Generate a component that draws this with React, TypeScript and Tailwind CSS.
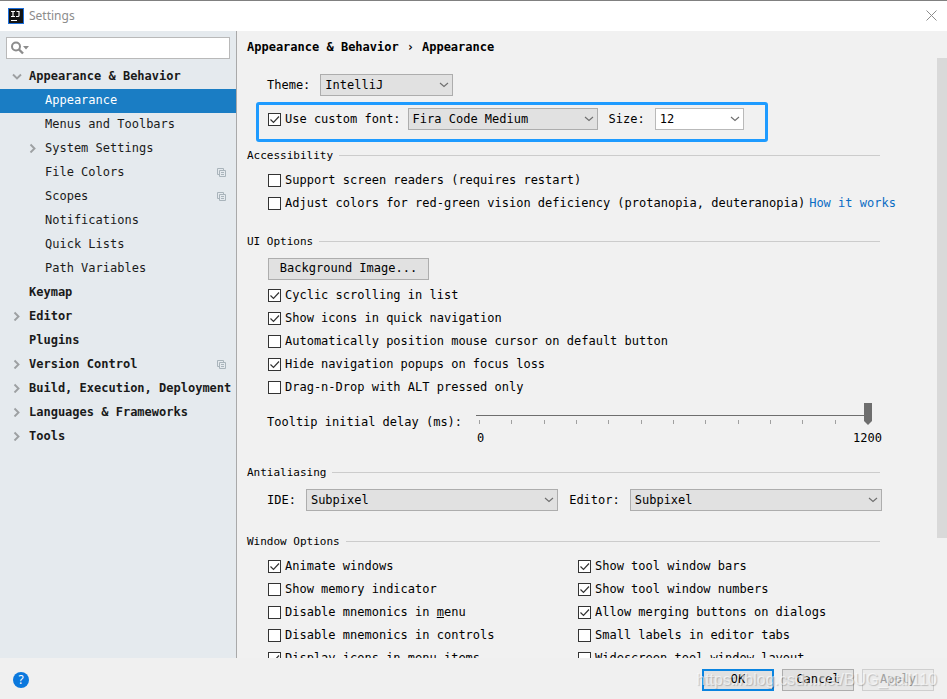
import { useId, useState } from "react";
import type { ReactNode } from "react";

type TreeRow = {
  label: string;
  level: "root" | "child";
  arrow?: "open" | "closed";
  copy?: boolean;
  selected?: boolean;
};

const tree: TreeRow[] = [
  { label: "Appearance & Behavior", level: "root", arrow: "open" },
  { label: "Appearance", level: "child", selected: true },
  { label: "Menus and Toolbars", level: "child" },
  { label: "System Settings", level: "child", arrow: "closed" },
  { label: "File Colors", level: "child", copy: true },
  { label: "Scopes", level: "child", copy: true },
  { label: "Notifications", level: "child" },
  { label: "Quick Lists", level: "child" },
  { label: "Path Variables", level: "child" },
  { label: "Keymap", level: "root" },
  { label: "Editor", level: "root", arrow: "closed" },
  { label: "Plugins", level: "root" },
  { label: "Version Control", level: "root", arrow: "closed", copy: true },
  { label: "Build, Execution, Deployment", level: "root", arrow: "closed" },
  { label: "Languages & Frameworks", level: "root", arrow: "closed" },
  { label: "Tools", level: "root", arrow: "closed" },
];

function Arrow({ kind }: { kind?: "open" | "closed" }) {
  return (
    <svg width="10" height="10" viewBox="0 0 10 10" className="shrink-0" aria-hidden="true">
      {kind === "open" && <path d="M1 3.500l4 4 4-4" fill="none" stroke="#9da0a2" strokeWidth="1.9" />}
      {kind === "closed" && <path d="M2.500 1.500l4 4-4 4" fill="none" stroke="#9da0a2" strokeWidth="1.9" />}
    </svg>
  );
}

function CopyIcon() {
  return (
    <svg width="9" height="9" viewBox="0 0 9 9" className="ml-auto shrink-0" aria-hidden="true">
      <path d="M2 6.5H.5V.5h6V2M2.5 2.5h6v6h-6zM4 4.5h3M4 6.5h3" fill="none" stroke="#a9b4bb" />
    </svg>
  );
}

function Sidebar() {
  return (
    <aside className="w-[237px] shrink-0 overflow-hidden border-r border-[#a9a9a9] bg-[#e5eaee] pt-1.5">
      <div className="mx-1.5 flex h-[22px] items-center border border-[#b9b9b9] bg-white pl-1">
        <svg width="20" height="14" viewBox="0 0 20 14" className="shrink-0" aria-hidden="true">
          <circle cx="5" cy="5.5" r="4" fill="none" stroke="#8c8c8c" strokeWidth="2" />
          <path d="M8 8.5l4 4" stroke="#8c8c8c" strokeWidth="2.4" />
          <path d="M12 5h6l-3 3.5z" fill="#8c8c8c" />
        </svg>
        <input type="search" aria-label="Search settings" className="min-w-0 flex-1 bg-transparent outline-none" />
      </div>
      <ul className="mt-1.5">
        {tree.map((row) => (
          <li
            key={row.label}
            className={
              "flex h-6 items-center gap-[7px] pr-2.5 pb-0.5 whitespace-pre " +
              (row.level === "root" ? "pl-3 font-bold " : "pl-7 ") +
              (row.selected ? "bg-[#1a7dc4] text-white" : "text-[#1a1a1a]")
            }
          >
            <Arrow kind={row.arrow} />
            <span>{row.label}</span>
            {row.copy && <CopyIcon />}
          </li>
        ))}
      </ul>
    </aside>
  );
}

function Check({ label, on = false }: { label: ReactNode; on?: boolean }) {
  const [checked, setChecked] = useState(on);
  return (
    <label className="flex h-[23px] shrink-0 items-center gap-1 whitespace-pre">
      <span className="grid size-[13px] shrink-0">
        <input
          type="checkbox"
          checked={checked}
          onChange={() => setChecked(!checked)}
          className="peer col-start-1 row-start-1 size-[13px] appearance-none border border-[#333333] bg-white"
        />
        <svg
          viewBox="0 0 13 13"
          className="pointer-events-none invisible col-start-1 row-start-1 size-[13px] peer-checked:visible"
          aria-hidden="true"
        >
          <path d="M2.5 6.5l3 3 5.5-6" fill="none" stroke="#333333" strokeWidth="1.2" />
        </svg>
      </span>
      <span className="pb-0.5">{label}</span>
    </label>
  );
}

type ComboProps = { label: string; value: string; width?: string; hideLabel?: boolean; white?: boolean };

function Combo({ label, value, width, hideLabel, white }: ComboProps) {
  const id = useId();
  return (
    <div className={"flex items-center gap-2.5 " + (width ? "" : "flex-auto")}>
      {!hideLabel && <label htmlFor={id}>{label}</label>}
      <span className={"grid items-center " + (width ?? "flex-auto")}>
        <select
          id={id}
          aria-label={label}
          defaultValue={value}
          className={
            "col-start-1 row-start-1 h-[22px] w-full appearance-none border pl-1 outline-none " +
            (white ? "border-[#b9b9b9] bg-white" : "border-[#adadad] bg-[#e1e1e1]")
          }
        >
          <option>{value}</option>
        </select>
        <svg
          width="10"
          height="6"
          viewBox="0 0 10 6"
          className="pointer-events-none col-start-1 row-start-1 mr-1 justify-self-end"
          aria-hidden="true"
        >
          <path d="M1 1l4 3.5L9 1" fill="none" stroke="#6e6e6e" strokeWidth="1.1" />
        </svg>
      </span>
    </div>
  );
}

function Heading({ children }: { children: ReactNode }) {
  return (
    <div className="flex h-4 items-center gap-1.5 pr-0.5">
      <h2 className="pt-0.5 text-[11px]">{children}</h2>
      <span className="h-px flex-1 bg-[#cccccc]" />
    </div>
  );
}

function DelaySlider() {
  const [delay, setDelay] = useState(1200);
  return (
    <div className="mt-1 flex h-[46px] items-start gap-3.5">
      <label htmlFor="delay" className="pt-[11px] whitespace-pre">
        Tooltip initial delay (ms):
      </label>
      <div className="flex-1">
        <div className="pr-2.5">
          <input
            id="delay"
            type="range"
            min={0}
            max={1200}
            step={100}
            value={delay}
            onChange={(e) => setDelay(Number(e.target.value))}
            className="block h-[22px] w-full appearance-none bg-[linear-gradient(#6e6e6e,#6e6e6e)] bg-[length:100%_1px] bg-[position:0_12px] bg-no-repeat outline-none [&::-webkit-slider-thumb]:h-[22px] [&::-webkit-slider-thumb]:w-2 [&::-webkit-slider-thumb]:appearance-none [&::-webkit-slider-thumb]:bg-[#6e6e6e] [&::-webkit-slider-thumb]:[clip-path:polygon(0_0,100%_0,100%_82%,50%_100%,0_82%)]"
          />
          <div className="-mt-[5px] flex justify-between pr-1 pl-[3px]">
            {Array.from({ length: 13 }, (_, i) => (
              <span key={i} className={"h-1 w-px " + (i === 12 ? "bg-transparent" : "bg-[#a0a0a0]")} />
            ))}
          </div>
        </div>
        <div className="mt-1.5 flex justify-between pl-px">
          <span>0</span>
          <span>1200</span>
        </div>
      </div>
    </div>
  );
}

function Main() {
  return (
    <main className="flex min-w-0 flex-1 flex-col bg-[#f1f1f1]">
      <div className="flex h-[27px] shrink-0 items-center gap-2 pt-1 pl-2.5 font-bold whitespace-pre">
        <span>Appearance &amp; Behavior</span>
        <span>›</span>
        <span>Appearance</span>
      </div>
      <div className="flex min-h-0 flex-1">
        <div className="flex min-w-0 flex-1 flex-col overflow-hidden pt-4 pr-[55px] pl-2.5">
          <div className="flex pl-5">
            <Combo label="Theme:" value="IntelliJ" width="w-[133px]" />
          </div>
          <div className="mt-1.5 mr-[114px] ml-[9px] flex h-10 shrink-0 items-start gap-[7px] rounded-[3px] border-3 border-[#1e9bff] pt-[3px] pl-[9px]">
            <Check label="Use custom font:" on />
            <div className="flex gap-[11px]">
              <Combo label="Custom font" value="Fira Code Medium" width="w-[190px]" hideLabel />
              <Combo label="Size:" value="12" width="w-[89px]" white />
            </div>
          </div>
          <div className="mt-[5px]">
            <Heading>Accessibility</Heading>
          </div>
          <div className="mt-1.5 pl-[21px]">
            <Check label="Support screen readers (requires restart)" />
            <div className="flex items-center gap-1 whitespace-pre">
              <Check label="Adjust colors for red-green vision deficiency (protanopia, deuteranopia)" />
              <a href="#how-it-works" className="pb-0.5 text-[#0a6cc4]">How it works</a>
            </div>
          </div>
          <div className="mt-[18px]">
            <Heading>UI Options</Heading>
          </div>
          <div className="mt-[9px] pl-[21px]">
            <button type="button" className="h-[22px] w-[161px] border border-[#adadad] bg-[#e1e1e1] pb-0.5">
              Background Image...
            </button>
            <div className="mt-1">
              <Check label="Cyclic scrolling in list" on />
              <Check label="Show icons in quick navigation" on />
              <Check label="Automatically position mouse cursor on default button" />
              <Check label="Hide navigation popups on focus loss" on />
              <Check label="Drag-n-Drop with ALT pressed only" />
            </div>
          </div>
          <div className="pl-5">
            <DelaySlider />
          </div>
          <div className="mt-[15px]">
            <Heading>Antialiasing</Heading>
          </div>
          <div className="mt-[9px] flex gap-[11px] pl-5">
            <Combo label="IDE:" value="Subpixel" />
            <Combo label="Editor:" value="Subpixel" />
          </div>
          <div className="mt-[22px]">
            <Heading>Window Options</Heading>
          </div>
          <div className="mt-1.5 grid grid-cols-2 gap-x-1.5 pl-[21px]">
            <div>
              <Check label="Animate windows" on />
              <Check label="Show memory indicator" />
              <Check label={<>Disable mnemonics in <u>m</u>enu</>} />
              <Check label="Disable mnemonics in controls" />
              <Check label="Display icons in menu items" on />
            </div>
            <div>
              <Check label="Show tool window bars" on />
              <Check label="Show tool window numbers" on />
              <Check label="Allow merging buttons on dialogs" on />
              <Check label="Small labels in editor tabs" />
              <Check label="Widescreen tool window layout" />
            </div>
          </div>
        </div>
        <div className="w-2.5 shrink-0">
          <div className="h-[80%] bg-[#d9d9d9]" />
        </div>
      </div>
    </main>
  );
}

export default function App() {
  return (
    <div className="flex h-screen flex-col overflow-hidden bg-[#f0f0f0] font-['DejaVu_Sans_Mono',monospace] text-[12px] leading-4 text-black">
      <header className="flex h-[31px] shrink-0 items-center border-t border-[#808080] bg-white pr-2.5 pl-2">
        <svg width="16" height="16" viewBox="0 0 16 16" aria-hidden="true">
          <rect width="16" height="16" fill="#1d6fdb" />
          <rect x="1" y="1" width="14" height="14" fill="#141414" />
          <path
            d="M3 3.5h4M5 3.5v5M3 8.5h4M8.500 3.500h2.500v4q0 1-1 1H8M3 12.500h6"
            fill="none"
            stroke="#fff"
            strokeWidth="1.2"
          />
        </svg>
        <h1 className="ml-[5px] font-['Noto_Sans',sans-serif] text-[12px] text-[#8c8c8c]">Settings</h1>
        <button type="button" aria-label="Close" className="ml-auto pb-0.5">
          <svg width="11" height="11" viewBox="0 0 11 11" aria-hidden="true">
            <path d="M.5.5l10 10M10.500.500l-10 10" stroke="#8c8c8c" fill="none" />
          </svg>
        </button>
      </header>
      <div className="flex min-h-0 flex-1">
        <Sidebar />
        <Main />
      </div>
      <footer className="relative flex h-[41px] shrink-0 items-center gap-2 pt-0.5 pr-[13px] pl-[13px]">
        <button
          type="button"
          aria-label="Help"
          className="mr-auto size-4 rounded-full bg-[#0b78dd] font-['Noto_Sans',sans-serif] text-[12px] text-white"
        >
          ?
        </button>
        <button type="button" className="h-[22px] w-[72px] border-2 border-[#0a84e0] bg-[#e1e1e1] pb-0.5">OK</button>
        <button type="button" className="h-[22px] w-[72px] border border-[#adadad] bg-[#e1e1e1] pb-0.5">Cancel</button>
        <button type="button" disabled className="h-[22px] w-[72px] border border-[#cfcfcf] bg-[#ebebeb] pb-0.5 text-[#a0a0a0]">Apply</button>
        <span className="pointer-events-none absolute right-2.5 bottom-[11px] font-['Liberation_Sans',sans-serif] text-[16px] text-white/60 [text-shadow:1px_1px_1px_rgba(0,0,0,0.2)]">
          https://blog.csdn.net/BUG_call110
        </span>
      </footer>
    </div>
  );
}
